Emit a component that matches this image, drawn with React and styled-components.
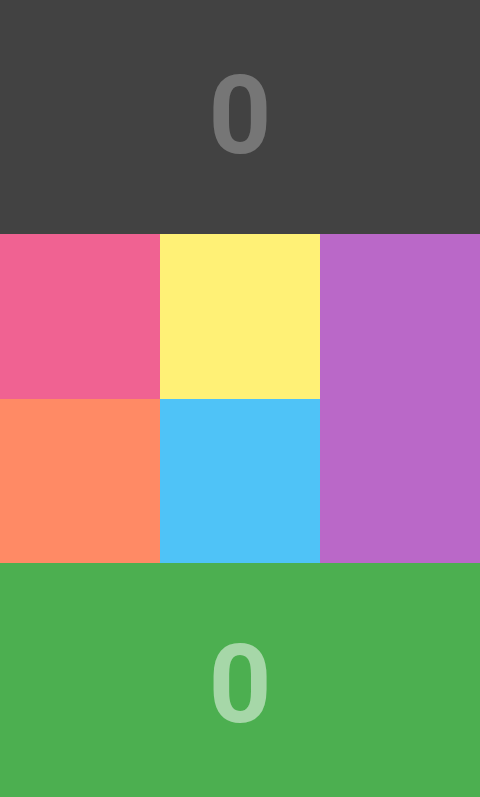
import styled, { createGlobalStyle } from "styled-components";

const Global = createGlobalStyle`
  html, body {
    margin: 0;
    padding: 0;
    height: 100%;
  }
  #root {
    height: 100%;
  }
`;

const Screen = styled.div`
  display: flex;
  flex-direction: column;
  width: 480px;
  height: 797px;
  font-family: Roboto, "Noto Sans", sans-serif;
`;

// the far player's panel is turned round so the score reads from their side
const ScorePanel = styled.div`
  height: 234px;
  box-sizing: border-box;
  padding-top: 9px;
  display: flex;
  align-items: center;
  justify-content: center;
  background-color: ${(p) => p.bg};
  color: ${(p) => p.fg};
  font-size: 110px;
  font-weight: 700;
  line-height: 1;
  transform: ${(p) => (p.flipped ? "rotate(180deg)" : "none")};
`;

const Pads = styled.div`
  flex: 1;
  display: grid;
  grid-template-columns: 160px 160px 160px;
  grid-template-rows: 1fr 1fr;
`;

const Pad = styled.div`
  background-color: ${(p) => p.color};
  grid-row: ${(p) => (p.tall ? "span 2" : "auto")};
`;

const App = () => {
  return (
    <Screen>
      <Global />
      <ScorePanel bg="#424242" fg="rgba(255, 255, 255, 0.28)" flipped>
        0
      </ScorePanel>
      <Pads>
        <Pad color="#f06292" />
        <Pad color="#fff176" />
        <Pad color="#ba68c8" tall />
        <Pad color="#ff8a65" />
        <Pad color="#4fc3f7" />
      </Pads>
      <ScorePanel bg="#4caf50" fg="rgba(255, 255, 255, 0.5)">0</ScorePanel>
    </Screen>
  );
};

export default App;
